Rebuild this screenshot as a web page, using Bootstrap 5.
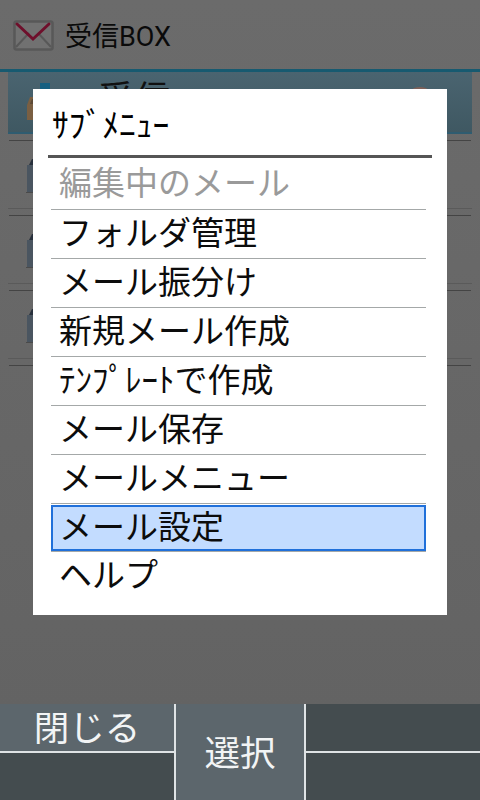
<!DOCTYPE html>
<html lang="ja">
<head>
<meta charset="utf-8">
<link href="https://cdn.jsdelivr.net/npm/bootstrap@5.3.0/dist/css/bootstrap.min.css" rel="stylesheet">
<style>
html,body{height:800px;overflow:hidden}
body{font-family:Roboto,"Noto Sans CJK JP","Liberation Sans",sans-serif;background:linear-gradient(#6b6b6b,#626262);color:#000}
.app-screen{width:480px;height:800px}
.top-bar{height:69px;padding:5px 13px 0;gap:11px;font-size:27px;color:#0a0a0a}
.top-bar svg{width:41px;height:32px;margin-top:-3px}
.top-rule{height:3px;background:#175a70}
.mail-list{height:632px;padding:0 8px}
.mail-row{height:62px;padding-left:19px;overflow:hidden}
.mail-row.is-current{background:linear-gradient(#4a6470,#3f5862);border-bottom:2px solid #2f5c70}
.row-gap{height:7px;border-bottom:1px solid #444;margin:0 1px}
.row-plain{height:68px;padding:4px 0 0 18px;border-bottom:1px solid #5a5a5a}
.row-plain svg{width:26px;height:36px}
.cur-label{font-size:36px;line-height:1;margin:10px 0 0 37px;color:#111}
.peek-dot{width:30px;height:30px;border-radius:50%;background:#7d6058;margin:15px 37px 0 auto}
.soft-bar{height:96px}
.soft-side{width:174px}
.soft-mid{width:132px;background:#5c666c;color:#f2f4f5;font-size:35.5px;padding-top:5px;border-left:2px solid #dfe3e5;border-right:2px solid #dfe3e5}
.soft-cell{height:47px;background:#444c4f}
.soft-cell.first{height:49px;border-bottom:2px solid #dfe3e5}
.soft-cell.lit{background:#5c666c;color:#f2f4f5;font-size:35.5px;padding-top:5px}
.sub-dialog{position:absolute;left:33px;top:89px;width:414px;height:526px;background:#fff;padding:0 15px}
.sub-title{height:69px;font-size:33.5px;line-height:1;padding-left:4px;padding-top:20px;border-bottom:3px solid #555}
.sub-list{margin:0 6px 0 3px;list-style:none;padding:0}
.sub-item{height:49px;border-bottom:1px solid #a4a8a8;font-size:33px;line-height:48px;padding-left:8px;white-space:nowrap;color:#0c0c0c}
.sub-item.off{height:52px;line-height:52px;color:#9a9a9a}
.sub-item.picked{background:#c3dcff;box-shadow:inset 0 0 0 2px #2070da;margin-top:1px;height:46px;line-height:45px;border-bottom:0}
.sub-item.after-pick{height:62px;line-height:47px;border-bottom:0;border-top:1px solid #a4a8a8}
</style>
</head>
<body>
<div class="app-screen d-flex flex-column">
  <header class="top-bar d-flex align-items-center">
    <svg viewBox="0 0 41 32"><rect x="1.5" y="1.5" width="38" height="28" rx="2" fill="#717171" stroke="#585858" stroke-width="2.5"/><path d="M3 27 16 13M38 27 25 13" stroke="#585858" stroke-width="2" fill="none"/><path d="M4 4 20 19 36 4" stroke="#6e0f2b" stroke-width="3" fill="none" stroke-linecap="round"/></svg>
    <span>受信BOX</span>
  </header>
  <div class="top-rule"></div>
  <main class="mail-list flex-grow-1">
    <div class="mail-row is-current d-flex">
      <svg width="34" height="50" viewBox="0 0 34 50" class="flex-shrink-0 mt-2"><rect x="13" y="3" width="10" height="14" fill="#155f80"/><path d="M0 25l3-8h31v23H0z" fill="#7a5f42"/><path d="M3 24l2-5h29v5z" fill="#5d4a36"/></svg>
      <span class="cur-label">受信</span>
      <span class="peek-dot"></span>
    </div>
    <div class="row-gap"></div>
    <div class="row-plain d-flex align-items-center"><svg viewBox="0 0 26 36"><path d="M0 33h9v1H0z" fill="#4a4a4a"/><path d="M1 33V6h25v27z" fill="#4a5560"/><path d="M3 6l3-6h20v6z" fill="#28303c"/></svg></div>
    <div class="row-gap"></div>
    <div class="row-plain d-flex align-items-center"><svg viewBox="0 0 26 36"><path d="M0 33h9v1H0z" fill="#4a4a4a"/><path d="M1 33V6h25v27z" fill="#4a5560"/><path d="M3 6l3-6h20v6z" fill="#28303c"/></svg></div>
    <div class="row-gap"></div>
    <div class="row-plain d-flex align-items-center"><svg viewBox="0 0 26 36"><path d="M0 33h9v1H0z" fill="#4a4a4a"/><path d="M1 33V6h25v27z" fill="#4a5560"/><path d="M3 6l3-6h20v6z" fill="#28303c"/></svg></div>
    <div class="row-gap"></div>
  </main>
  <footer class="soft-bar d-flex">
    <div class="soft-side"><div class="soft-cell first lit d-flex align-items-center justify-content-center">閉じる</div><div class="soft-cell"></div></div>
    <div class="soft-mid d-flex align-items-center justify-content-center">選択</div>
    <div class="soft-side flex-grow-1"><div class="soft-cell first"></div><div class="soft-cell"></div></div>
  </footer>
</div>
<section class="sub-dialog">
  <div class="sub-title">ｻﾌﾞﾒﾆｭｰ</div>
  <ul class="sub-list">
    <li class="sub-item off">編集中のメール</li>
    <li class="sub-item">フォルダ管理</li>
    <li class="sub-item">メール振分け</li>
    <li class="sub-item">新規メール作成</li>
    <li class="sub-item">ﾃﾝﾌﾟﾚｰﾄで作成</li>
    <li class="sub-item">メール保存</li>
    <li class="sub-item">メールメニュー</li>
    <li class="sub-item picked">メール設定</li>
    <li class="sub-item after-pick">ヘルプ</li>
  </ul>
</section>
<script src="https://cdn.jsdelivr.net/npm/bootstrap@5.3.0/dist/js/bootstrap.bundle.min.js"></script>
</body>
</html>
